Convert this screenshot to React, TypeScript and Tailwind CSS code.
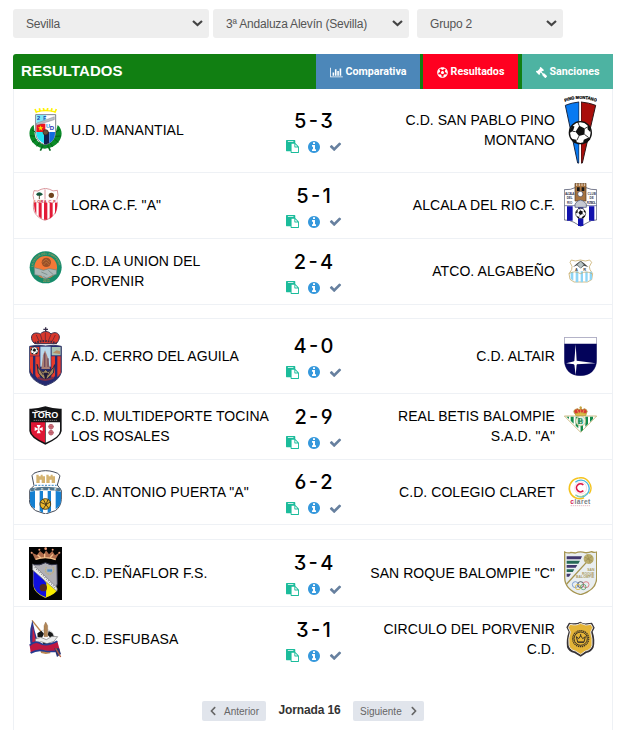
import type * as React from 'react';
import { FaChevronLeft, FaChevronRight, FaFutbol, FaGavel } from 'react-icons/fa';

interface CrestProps {
  height: number;
  children: React.ReactNode;
}

// Crests are drawn on a 99 unit wide canvas, three units per pixel.
const Crest: React.FC<CrestProps> = ({ height, children }) => (
  <svg className="w-[33px] shrink-0" viewBox={`0 0 99 ${height}`} aria-hidden="true">
    {children}
  </svg>
);

const Ball: React.FC<{ cx: number; cy: number; r: number }> = ({ cx, cy, r }) => (
  <g transform={`translate(${cx} ${cy}) scale(${r / 34})`}>
    <circle r="32" fill="#fff" stroke="#111" strokeWidth="4" />
    <path d="M-3-20 13-12 12 5-4 10-14-3zM-32-6l9-14 6 2-4 12-8 6zM-26 18l14 3 2 8-7 2zM22-23l8 11-1 10-8-8zM10 21l16-8 3 6-12 12-9-2z" fill="#111" />
    <path d="M-3-20-8-32M13-12l9-5M12 5l12 9M-4 10l-6 12M-14-3l-9-1" stroke="#111" strokeWidth="2.5" fill="none" />
  </g>
);

const Manantial = () => (
  <Crest height={129}>
    <path d="M14 50C-4 62-1 91 12 104c8 9 22 17 36 18 16-1 31-8 40-19 13-15 14-39-2-52l-6 24c-2 21-15 32-31 35-19-4-31-14-32-34z" fill="#0a8a28" />
    <path d="M8 65l12 8M3 83l15 2M9 102l14-8M23 115l9-12M92 64l-12 9M96 84l-16 1M88 103l-11-9M71 116l-8-12" stroke="#056018" strokeWidth="3" />
    <path d="M42 112l-8 16M56 112l8 16" stroke="#086c20" strokeWidth="5" />
    <path d="M20 12q30-9 60 0M18 3l5 12M31 1l3 10M43 0l2 9M56 0l-1 9M69 1l-3 10M82 3l-5 12" fill="none" stroke="#fff200" strokeWidth="5" />
    <path d="M20 20h60v50c0 20-12 34-31 41-18-6-29-19-29-40z" fill="#fff" stroke="#394351" strokeWidth="2" />
    <path d="M22 21h29v20l-29 8z" fill="#7ce9f5" />
    <path d="M22 47h27v25H22z" fill="#ed1520" />
    <path d="M22 72h27v36C32 101 22 91 22 72z" fill="#24e3f4" />
    <path d="M45 72h16v33l-12 5-4-2z" fill="#13204e" />
    <path d="M61 72h17c0 19-6 27-17 33z" fill="#126ce0" />
    <path d="M22 46l54-20v9L22 52z" fill="#b8bec4" stroke="#667" strokeWidth="1" />
    <path d="M35 52l2 6h6l-5 4 2 6-5-4-5 4 2-6-5-4h6z" fill="#ffe400" />
    <circle cx="50" cy="73" r="8" fill="#69503b" stroke="#302018" strokeWidth="2" />
    <text x="24" y="37" fontSize="17" fontWeight="700" fill="#2434af" fontFamily="Liberation Sans, sans-serif">2</text>
    <text x="43" y="35" fontSize="15" fontWeight="700" fill="#2434af" fontFamily="Liberation Sans, sans-serif">F</text>
    <text x="51" y="59" fontSize="17" fontWeight="700" fill="#128bdd" fontFamily="Liberation Sans, sans-serif">U</text>
    <text x="62" y="67" fontSize="18" fontWeight="700" fill="#2031b2" fontFamily="Liberation Sans, sans-serif">D</text>
  </Crest>
);

const PinoMontano = () => (
  <Crest height={204}>
    <defs>
      <path id="pino-arc" d="M3 18Q50-2 97 18" />
    </defs>
    <text fontSize="13" fontWeight="700" fill="#111" stroke="#111" strokeWidth="0.8" fontFamily="Liberation Sans, sans-serif">
      <textPath href="#pino-arc" textLength="96" lengthAdjust="spacingAndGlyphs">PINO MONTANO</textPath>
    </text>
    <path d="M4 28q20-8 41-10v183h-4z" fill="#087af2" stroke="#182744" strokeWidth="3" />
    <path d="M51 18q23 2 44 10L55 201h-4z" fill="#a90e0b" stroke="#2b1719" strokeWidth="3" />
    <path d="M46 18h5v185h-5z" fill="#fff" />
    <Ball cx={49} cy={110} r={35} />
  </Crest>
);

const Lora = () => (
  <Crest height={99}>
    <path d="M15 8q12 4 21-4 13-6 26 0 9 8 23 3l2 15-4 14c4 25 0 49-35 61C13 86 10 61 15 37l-3-15z" fill="#fff" stroke="#c96670" strokeWidth="2" />
    <path d="M15 43h7v36q-7-11-7-36zM29 43h9v49l-9-7zM45 43h10v52h-10zM62 43h9v42l-9 8zM78 43h7q0 23-7 36z" fill="#e31b37" />
    <path d="M48 4v32" stroke="#c76570" strokeWidth="2" />
    <path d="M31 20v14" stroke="#5c5131" strokeWidth="3" />
    <path d="M21 19q9-12 21 0l-6 4H25z" fill="#17563c" />
    <circle cx="67" cy="22" r="8" fill="#70431e" />
    <path d="M14 34h70v10H14z" fill="#fff3f2" />
    <text x="16" y="44" fontSize="12" fontWeight="700" fill="#c92338" textLength="67" fontFamily="Liberation Sans, sans-serif">LORA C.F.</text>
  </Crest>
);

const Alcala = () => (
  <Crest height={132}>
    <path d="M1 20q20 1 32-6h33q15 7 32 6v91q-16-1-26 7l-22 12-20-12q-14-8-29-7z" fill="#fff" stroke="#333a55" strokeWidth="2" />
    <path d="M33 1h33v53H33z" fill="#a77440" stroke="#52371d" strokeWidth="2" />
    <path d="M38 1v8m8-8v8m8-8v8m8-8v8" stroke="#fff" strokeWidth="2" />
    <path d="M39 13h8v11h-8zM53 13h8v11h-8z" fill="#171719" />
    <circle cx="49" cy="33" r="8" fill="#fff" stroke="#3b3c50" strokeWidth="2" />
    <path d="M2 68h96" stroke="#414982" strokeWidth="2" />
    <path d="M9 70h17v43H9zM75 70h16v43H75zM42 61h16v18H42zM42 106h16v23H42z" fill="#1212ad" />
    <path d="M33 63q16-24 34 0v10H33z" fill="#c6c9d2" stroke="#46506b" strokeWidth="2" />
    <Ball cx={50} cy={91} r={16} />
    <g fontSize="9" fontWeight="700" fill="#3b4054" textAnchor="middle" fontFamily="Liberation Sans, sans-serif">
      <text x="17" y="35" textLength="28">ALCALA</text>
      <text x="17" y="48">DEL</text>
      <text x="17" y="62">RIO</text>
      <text x="83" y="35">CLUB</text>
      <text x="83" y="48">DE</text>
      <text x="82" y="62" textLength="27">FUTBOL</text>
    </g>
  </Crest>
);

const Union = () => (
  <Crest height={120}>
    <defs>
      <path id="union-arc" d="M12 49a38 38 0 0 1 76 0" />
    </defs>
    <circle cx="50" cy="49" r="48" fill="#178c6b" />
    <circle cx="50" cy="49" r="34" fill="#f47837" />
    <circle cx="52" cy="34" r="14" fill="#995029" />
    <path d="M40 34l11-9 12 10M44 42l8-9 9 9" stroke="#c77b3c" fill="none" strokeWidth="2" />
    <path d="M16 50q18 4 27 8l17-5 23 4-1 13-13 4-18 9q-8 1-14-8l-20-4z" fill="#acb9b8" stroke="#65837e" strokeWidth="2" />
    <path d="M37 63l18 8M43 76l12 7M58 58l15 13" stroke="#667b78" strokeWidth="2" />
    <text fontSize="9" fontWeight="700" fill="#a09a5c" fontFamily="Liberation Sans, sans-serif">
      <textPath href="#union-arc" textLength="114">LA UNION DEL PORVENIR</textPath>
    </text>
    <text x="41" y="94" fontSize="9" fontWeight="700" fill="#a09a5c" fontFamily="Liberation Sans, sans-serif">2015</text>
  </Crest>
);

const Algabeno = () => (
  <Crest height={72}>
    <path d="M22 3l12 3 15-3 15 3 13-3 6 7-7 13 2 9 8 12-3 18-13 7H30l-12-8-3-17 8-12 1-10-6-12z" fill="#fff" stroke="#bd9d4e" strokeWidth="2" />
    <path d="M20 39h8v26l-8-6zM35 37h8v33h-8zM50 37h7v33h-7zM64 38h7v30h-7zM77 38h7v22l-7 5z" fill="#8ed5f5" />
    <path d="M27 24l11-10 12-9 12 9 11 10-13-4-10 8-11-9z" fill="#414544" />
    <path d="M50 7l10 10-10 11-11-11z" fill="#b8c4c5" stroke="#4f5755" />
    <text x="33" y="35" fontSize="12" fontWeight="700" fill="#42474b" fontFamily="Liberation Sans, sans-serif">A</text>
    <text x="58" y="35" fontSize="12" fontWeight="700" fill="#42474b" fontFamily="Liberation Sans, sans-serif">R</text>
    <path d="M15 44q17-11 34 0 19-10 35 0" stroke="#c2a45c" strokeWidth="2" fill="none" />
  </Crest>
);

const Cerro = () => (
  <Crest height={177}>
    <path d="M50 1v15M43 7h14" stroke="#39304b" strokeWidth="4" />
    <path d="M17 50C2 37 6 19 20 18c7 0 11 1 14 3 9-10 24-10 32 0 10-8 25-4 25 9 0 8-4 14-9 20z" fill="#d8372c" stroke="#372e4b" strokeWidth="3" />
    <path d="M17 48q33-12 66 1" stroke="#382a43" strokeWidth="6" fill="none" strokeDasharray="5 3" />
    <path d="M22 24l8 18M34 22l6 20M49 17v25M66 22l-8 20M79 24l-9 18" stroke="#7c2932" strokeWidth="3" />
    <path d="M2 58q25-6 48-1 24-5 47 1v78q-7 27-48 40Q7 162 2 136z" fill="#252a71" stroke="#383f69" strokeWidth="3" />
    <path d="M3 60h28v26H3zM3 88h9v55q-9-8-9-20zM19 88h13v69q-13-6-13-15zM67 88h11v57q0 5-11 12zM85 88h10v50l-10 13z" fill="#e93a2b" />
    <path d="M34 59h31v60H34z" fill="#b9d8eb" />
    <path d="M68 60h27v25H68z" fill="#a9c4b5" />
    <path d="M71 78l12-8 10 3v8z" fill="#b58e65" />
    <Ball cx={16} cy={71} r={12} />
    <path d="M42 85l6-15 8 20 7 36H37z" fill="#a97e74" />
    <path d="M47 79v41M57 94v26" stroke="#71495b" strokeWidth="4" />
    <path d="M24 112q6 20 20 22l6-7 6 7q15-3 21-21l-4 25-19 18H44L28 138z" fill="#a38b62" stroke="#292741" strokeWidth="3" />
    <path d="M34 130l9 14M66 130l-9 14" stroke="#3a3046" strokeWidth="3" />
    <path d="M43 137h15l-8 25z" fill="#201b39" />
    <path d="M26 152q24 14 48-1" stroke="#7b3048" strokeWidth="6" fill="none" />
  </Crest>
);

const Altair = () => (
  <Crest height={117}>
    <path d="M1 1h97v66c0 32-20 49-49 49C20 116 1 99 1 67z" fill="#fff" stroke="#77759b" strokeWidth="2" />
    <path d="M1 20h97v48c0 31-20 48-49 48S1 99 1 68z" fill="#03035a" />
    <path d="M35 22l3 49 57 8-57 3-3 33-4-33-25-3 25-6z" fill="#fff" />
    <circle cx="34" cy="78" r="6" fill="#fff" />
  </Crest>
);

const Tocina = () => (
  <Crest height={117}>
    <path d="M1 8Q25 9 49 1q25 8 49 7v67q-2 20-49 41Q2 95 1 75z" fill="#121315" />
    <path d="M6 49h42v61Q6 91 6 74z" fill="#df1735" />
    <path d="M50 49h43v25q0 18-43 36z" fill="#fff" />
    <text x="10" y="36" fontSize="25" fontWeight="700" textLength="78" lengthAdjust="spacingAndGlyphs" fill="#fff" fontFamily="Liberation Sans, sans-serif">TORO</text>
    <path d="M17 14q16 7 37 1M12 17v5" stroke="#fff" strokeWidth="3" fill="none" />
    <path d="M14 43h71" stroke="#aaa" strokeWidth="2" strokeDasharray="4 2" />
    <path d="M28 68l-5-11h12l-5 11 11-5v12l-11-5 5 12H23l5-12-11 5V63z" fill="#fff" />
    <g fill="#db7983" stroke="#ac5360" strokeWidth="2">
      <circle cx="66" cy="62" r="7" />
      <circle cx="66" cy="80" r="7" />
      <path d="M58 62h17M58 80h17M66 54v34" />
    </g>
  </Crest>
);

const Betis = () => (
  <Crest height={117}>
    <path d="M1 30h97L50 79z" fill="#fff" stroke="#b69b4b" strokeWidth="2" />
    <path d="M7 32h8v7zM20 32h9v21l-9-9zM35 32h8v35l-8-8zM49 32h8v40l-7 6zM64 32h8v22l-8 8zM78 32h9v7l-9 9z" fill="#138b4d" />
    <circle cx="50" cy="45" r="15" fill="#e8f2e5" stroke="#b69b4b" strokeWidth="1.5" />
    <text x="42" y="53" fontSize="22" fontWeight="700" fill="#158953" fontFamily="Liberation Serif, serif">B</text>
    <path d="M43 35v20M42 45h16" stroke="#158953" strokeWidth="2.5" />
    <path d="M34 25q-9-11 1-15 7-4 10 1 5-7 11 0 5-5 11 0 6 5-2 14z" fill="#d83737" stroke="#b8973c" strokeWidth="3" />
    <path d="M50 1v9M46 4h8M35 23q15-5 31 0v5H35z" stroke="#c2a33b" strokeWidth="3" fill="#e4c34d" />
    <path d="M40 12l4 10M50 10v12M60 12l-4 10" stroke="#e7c355" strokeWidth="2" />
  </Crest>
);

const Puerta = () => (
  <Crest height={132}>
    <path d="M9 17Q13 8 25 6q12-4 25-4 13 0 25 4 12 2 18 11l-8 28 12 16v28q-2 22-18 33l-29 10-30-10Q1 109 1 89V61l14-14z" fill="#fff" stroke="#454c5a" strokeWidth="3" />
    <path d="M22 39V14h7v5h6v-5h6v5h7v20zM52 39V14h7v5h6v-5h6v5h7v20z" fill="#d4b371" />
    <path d="M32 39V29h6v10M62 39V29h6v10" fill="#fff" />
    <path d="M18 46h65" stroke="#599bd0" strokeWidth="4" strokeDasharray="6 4" />
    <path d="M4 55q46-9 91 0v9q-46-7-91 0z" fill="#52758b" />
    <path d="M3 65q10-2 15-2v53Q1 108 3 91zM32 63h10v65l-10-5zM56 63h10v61l-10 5zM80 63q9 1 16 2v25q0 18-16 28z" fill="#1580d1" />
    <circle cx="49" cy="102" r="16" fill="#eab72d" stroke="#50401a" strokeWidth="3" />
    <path d="M35 97l16 7 14-9M43 88l8 16-9 14M57 88l-6 16 8 11" stroke="#50401a" strokeWidth="3" fill="none" />
    <text x="16" y="62" fontSize="9" fontWeight="700" textLength="66" fill="#fff" fontFamily="Liberation Sans, sans-serif">C D A P</text>
  </Crest>
);

const Claret = () => (
  <Crest height={92}>
    <g fill="none">
      <path d="M44 3a31 31 0 1 0 16 59" stroke="#f4c31d" strokeWidth="5" />
      <path d="M44 3a31 31 0 0 1 32 47" stroke="#f4c31d" strokeWidth="4" />
      <path d="M34 16a25 25 0 1 1 1 38" stroke="#48b9de" strokeWidth="4" />
      <path d="M68 48a24 24 0 0 1-34 6" stroke="#a8d38f" strokeWidth="3" />
      <circle cx="50" cy="33" r="18" stroke="#f5c9d4" strokeWidth="2" />
      <path d="M58 24a12 12 0 1 0 0 17" stroke="#db1647" strokeWidth="5" />
    </g>
    <text x="19" y="80" fontSize="20" fontWeight="700" fill="#777c82" fontFamily="Liberation Sans, sans-serif" textLength="60">
      <tspan fill="#d32351">c</tspan>laret
    </text>
    <path d="M20 86h60" stroke="#d69ba6" strokeWidth="2" strokeDasharray="4 2" />
  </Crest>
);

const Penaflor = () => (
  <Crest height={159}>
    <path d="M0 0h99v159H0z" fill="#030303" />
    <path d="M19 38L9 17l15 7 9-12 12 10 6-12 9 12 10-10 8 13 13-8-12 21q-30-10-60 0z" fill="#af6c4c" />
    <path d="M20 37q30-11 60 1M26 24l9 8M47 20v11M72 22l-8 9" stroke="#f5c28e" strokeWidth="4" fill="none" />
    <circle cx="8" cy="17" r="3" fill="#f1a27b" />
    <circle cx="31" cy="8" r="3" fill="#f1a27b" />
    <circle cx="50" cy="5" r="4" fill="#f1a27b" />
    <circle cx="71" cy="8" r="3" fill="#f1a27b" />
    <circle cx="91" cy="17" r="3" fill="#f1a27b" />
    <path d="M13 53q20 4 36-6 17 10 35 5l1 58q-2 28-36 42-33-14-36-40z" fill="#b1b0b5" stroke="#34364b" strokeWidth="3" />
    <path d="M13 61l73 65q-8 18-37 26-36-15-36-39z" fill="#f8ed00" />
    <path d="M13 61l39 47-1 43q-37-14-38-40z" fill="#1010df" />
    <path d="M11 51l73 71v11L11 69z" fill="#eee" stroke="#74767d" strokeWidth="2" />
    <path d="M17 61l61 61" stroke="#7f8084" strokeWidth="4" strokeDasharray="3 4" />
    <circle cx="43" cy="122" r="11" fill="#552c1c" />
    <path d="M52 60q-8 20 10 22 17-4 10-22" stroke="#c9b460" strokeWidth="3" strokeDasharray="4 2" fill="none" />
    <path d="M55 67h14v7H55z" fill="#4c92c9" />
  </Crest>
);

const SanRoque = () => (
  <Crest height={132}>
    <path d="M2 3q11 5 19 1l13 2Q48 0 63 5q10 1 20-3 7 4 15 1v78q-1 36-48 50Q3 117 2 80z" fill="#e9eef0" stroke="#a69551" strokeWidth="4" />
    <path d="M8 16h46l-4 9H8zM8 42h32l-5 8H8zM8 68h13l-6 9H8z" fill="#41386e" />
    <path d="M8 29h40l-5 9H8zM8 55h23l-5 8H8z" fill="#266856" />
    <path d="M8 99L70 31" stroke="#a69551" strokeWidth="4" />
    <circle cx="74" cy="24" r="15" fill="#b9ac6c" />
    <path d="M62 18l24 13M64 30l20-14M70 11l9 27" stroke="#988b51" strokeWidth="2" />
    <g fontSize="10" fontWeight="700" textAnchor="end" fill="#aa9b5f" fontFamily="Liberation Sans, sans-serif">
      <text x="91" y="60">SAN</text>
      <text x="91" y="71">ROQUE</text>
      <text x="91" y="82" textLength="55">BALOMPIE</text>
    </g>
    <g fill="none" strokeWidth="2.5">
      <circle cx="34" cy="101" r="9" stroke="#6d93d0" />
      <circle cx="50" cy="101" r="9" stroke="#44494f" />
      <circle cx="66" cy="101" r="9" stroke="#d87178" />
      <circle cx="42" cy="108" r="8" stroke="#d9b94a" />
      <circle cx="58" cy="108" r="8" stroke="#57a46d" />
    </g>
  </Crest>
);

const Esfubasa = () => (
  <Crest height={118}>
    <path d="M9 4l28 35" stroke="#bb8248" strokeWidth="4" />
    <path d="M10 4q-8 26-7 49 0 18 3 26l17-4 3-10Q16 36 10 4z" fill="#283991" />
    <path d="M11 20L10 70l11-3z" fill="#c51f43" />
    <circle cx="51" cy="57" r="25" fill="#fff" stroke="#b9bbbd" strokeWidth="2" />
    <path d="M25 43l12-8 8 9-6 12-13-2zM59 36l11 6 5 11-10 4-9-9zM41 68l14-5 9 9-8 11H44z" fill="#171818" />
    <path d="M45 53V20l5-11 6 11v33z" fill="#b18657" stroke="#7e5c3b" />
    <path d="M19 60l16-5 17 7 17-10 17 1-11 14-21 7-17-6-17 4z" fill="#eceded" stroke="#777" strokeWidth="2" />
    <path d="M34 92h30v11l-14 2-14-3z" fill="#bb8852" />
    <path d="M2 79q15-15 30-7 18 12 53-5l8 28q-20 2-40 0-25-4-48 6z" fill="#be1741" />
    <path d="M2 79q15-15 30-7 18 12 53-5M5 102q20-12 42-6 20 4 44-2" stroke="#253b91" strokeWidth="5" fill="none" />
    <path d="M76 88l8 26 12-9-6-17z" fill="#29336f" />
    <path d="M80 88l15 26" stroke="#b35c41" strokeWidth="4" />
  </Crest>
);

const Circulo = () => (
  <Crest height={108}>
    <path d="M49 2q8 7 20 5l15-2 8 15-6 12q8 24 3 47-5 14-22 17l-17 11-19-11q-17-3-22-17-3-24 5-47L7 19 15 5q21 5 34-3z" fill="#373337" />
    <path d="M49 7q17 9 32 3l5 10-6 13q6 20 4 40-4 15-20 17L50 100 34 90Q18 87 15 73q-3-20 4-40l-6-13 5-10q20 5 31-3z" fill="#e4b437" stroke="#eee8df" strokeWidth="3" />
    <circle cx="50" cy="53" r="24" fill="none" stroke="#3c3326" strokeWidth="4" strokeDasharray="4 2" />
    <circle cx="50" cy="53" r="20" fill="none" stroke="#3c3326" strokeWidth="3" />
    <path d="M37 47l7 6 6-9 6 9 8-6-4 16H41z" fill="#e4b437" stroke="#3c3326" strokeWidth="3" />
    <path d="M50 39v7M41 64h19" stroke="#3c3326" strokeWidth="3" />
  </Crest>
);

const PasteIcon = () => (
  <svg className="w-[13px] h-[13px] fill-[#1bbc9b]" viewBox="0 0 1792 1792">
    <path d="M768 1664h896v-640h-416q-40 0-68-28t-28-68v-416h-384v1152zm256-1440v-64q0-13-9.5-22.5t-22.5-9.5h-704q-13 0-22.5 9.5t-9.5 22.5v64q0 13 9.5 22.5t22.5 9.5h704q13 0 22.5-9.5t9.5-22.5zm256 672h299l-299-299v299zm512 128v672q0 40-28 68t-68 28h-960q-40 0-68-28t-28-68v-160h-544q-40 0-68-28t-28-68v-1344q0-40 28-68t68-28h1088q40 0 68 28t28 68v328q21 13 36 28l408 408q28 28 48 76t20 88z" />
  </svg>
);

const InfoIcon = () => (
  <svg className="w-[14px] h-[14px] fill-[#3598dc]" viewBox="0 0 1792 1792">
    <path d="M1152 1376v-160q0-14-9-23t-23-9h-96v-512q0-14-9-23t-23-9h-320q-14 0-23 9t-9 23v160q0 14 9 23t23 9h96v320h-96q-14 0-23 9t-9 23v160q0 14 9 23t23 9h448q14 0 23-9t9-23zm-128-896v-160q0-14-9-23t-23-9h-192q-14 0-23 9t-9 23v160q0 14 9 23t23 9h192q14 0 23-9t9-23zm640 416q0 209-103 385.5t-279.5 279.5-385.5 103-385.5-103-279.5-279.5-103-385.5 103-385.5 279.5-279.5 385.5-103 385.5 103 279.5 279.5 103 385.5z" />
  </svg>
);

const CheckIcon = () => (
  <svg className="w-[13px] h-[13px] fill-[#67809f]" viewBox="0 0 1792 1792">
    <path d="M1671 566q0 40-28 68l-724 724-136 136q-28 28-68 28t-68-28l-136-136-362-362q-28-28-28-68t28-68l136-136q28-28 68-28t68 28l294 295 656-657q28-28 68-28t68 28l136 136q28 28 28 68z" />
  </svg>
);

const BarChartIcon = () => (
  <svg className="w-[13px] h-[11px] fill-white" viewBox="0 0 2048 1792">
    <path d="M640 896v512h-256v-512h256zm384-512v1024h-256v-1024h256zm1024 1152v128h-2048v-1536h128v1408h1920zm-640-896v768h-256v-768h256zm384-384v1152h-256v-1152h256z" />
  </svg>
);

interface Match {
  home: string;
  away: string;
  score: string;
  homeCrest: React.ReactNode;
  awayCrest: React.ReactNode;
  className: string;
}

const matches: Match[] = [
  { home: 'U.D. MANANTIAL', away: 'C.D. SAN PABLO PINO MONTANO', score: '5 - 3', homeCrest: <Manantial />, awayCrest: <PinoMontano />, className: 'h-[84px] border-b pb-0.5 [&>.score]:mt-0.5' },
  { home: 'LORA C.F. "A"', away: 'ALCALA DEL RIO C.F.', score: '5 - 1', homeCrest: <Lora />, awayCrest: <Alcala />, className: 'h-[66px] border-b pb-0.5 [&>.score]:mt-0.5' },
  { home: 'C.D. LA UNION DEL PORVENIR', away: 'ATCO. ALGABEÑO', score: '2 - 4', homeCrest: <Union />, awayCrest: <Algabeno />, className: 'h-[66px] border-b pb-0.5 [&>.score]:mt-0.5' },
  { home: 'A.D. CERRO DEL AGUILA', away: 'C.D. ALTAIR', score: '4 - 0', homeCrest: <Cerro />, awayCrest: <Altair />, className: 'mt-[13px] h-[76px] border-y' },
  { home: 'C.D. MULTIDEPORTE TOCINA LOS ROSALES', away: 'REAL BETIS BALOMPIE S.A.D. "A"', score: '2 - 9', homeCrest: <Tocina />, awayCrest: <Betis />, className: 'h-[66px] border-b pb-0.5 [&>.score]:mt-0.5' },
  { home: 'C.D. ANTONIO PUERTA "A"', away: 'C.D. COLEGIO CLARET', score: '6 - 2', homeCrest: <Puerta />, awayCrest: <Claret />, className: 'h-[65px] border-b' },
  { home: 'C.D. PEÑAFLOR F.S.', away: 'SAN ROQUE BALOMPIE "C"', score: '3 - 4', homeCrest: <Penaflor />, awayCrest: <SanRoque />, className: 'mt-[14px] h-[68px] border-y' },
  { home: 'C.D. ESFUBASA', away: 'CIRCULO DEL PORVENIR C.D.', score: '3 - 1', homeCrest: <Esfubasa />, awayCrest: <Circulo />, className: 'h-[65px] pb-0.5 [&>.score]:mt-0.5' },
];

const MatchRow: React.FC<Match> = ({ home, away, score, homeCrest, awayCrest, className }) => (
  <div className={`flex items-center border-[#eef1f5] px-[15px] text-sm leading-5 tracking-[0.06px] text-black ${className}`}>
    {homeCrest}
    <div className="ml-[9px] w-[201px]">{home}</div>
    <div className="score flex h-12 w-[83px] flex-col items-center">
      <div className="font-['Inter'] text-[20px] leading-7 font-medium tracking-normal whitespace-pre [word-spacing:-3px] [font-feature-settings:'cv09','cv03','cv04']">{score}</div>
      <div className="mt-[2px] flex h-5 shrink-0 items-center gap-[8px]">
        <PasteIcon />
        <InfoIcon />
        <CheckIcon />
      </div>
    </div>
    <div className="mr-[9px] w-[200px] text-right">{away}</div>
    {awayCrest}
  </div>
);

const Select: React.FC<{ label: string; className: string }> = ({ label, className }) => (
  <button className={`flex h-[29px] items-center justify-between rounded-[3px] bg-[#eee] pr-[6px] pl-[13px] text-xs tracking-[-0.2px] text-[#555] ${className}`}>
    {label}
    <svg className="h-[7px] w-[11px]" viewBox="0 0 11 7" fill="none" stroke="#444" strokeWidth="2.2">
      <path d="M1 1l4.5 4L10 1" />
    </svg>
  </button>
);

export default function App() {
  return (
    <div className="h-[730px] w-[618px] overflow-hidden bg-white pt-[9px] pl-[13px] font-['Liberation_Sans',Arial,sans-serif]">
      <div className="flex">
        <Select label="Sevilla" className="w-[196px]" />
        <Select label="3ª Andaluza Alevín (Sevilla)" className="ml-1 w-[196px]" />
        <Select label="Grupo 2" className="ml-2 w-[146px]" />
      </div>

      <div className="mt-4 w-[600px]">
        <div className="flex h-[35px] items-stretch rounded-tl-[3px] bg-[#117f12] text-white">
          <h1 className="flex flex-1 items-center pl-2 text-[15px] font-bold tracking-[0.05px]">RESULTADOS</h1>
          <div className="flex font-['Roboto'] text-[10.7px] font-bold">
            <button className="mr-[3px] flex w-[104px] items-center justify-center gap-[3px] bg-[#4c87b9] pt-[2px]">
              <BarChartIcon />
              Comparativa
            </button>
            <button className="mr-1 flex w-[95px] items-center justify-center gap-[3px] bg-[#ff0020] pt-[2px]">
              <FaFutbol size={11} />
              Resultados
            </button>
            <button className="flex w-[91px] items-center justify-center gap-[3px] bg-[#4db3a2] pt-[2px]">
              <FaGavel size={11} className="-scale-x-100" />
              Sanciones
            </button>
          </div>
        </div>

        <div className="h-[641px] border-x border-[#eef1f5]">
          {matches.map((match) => (
            <MatchRow key={match.home} {...match} />
          ))}
          <div className="mt-[29px] flex h-5 items-center pl-[188px] text-[10px] text-[#666]">
            <button className="flex h-5 w-16 items-center rounded-[2px] bg-[#e1e5ec] pl-[6px]">
              <FaChevronLeft size={10} />
              <span className="ml-[6px]">Anterior</span>
            </button>
            <span className="w-[87px] pb-[3px] text-center text-xs font-bold tracking-[-0.15px] text-[#333]">Jornada 16</span>
            <button className="flex h-5 w-[71px] items-center rounded-[2px] bg-[#e1e5ec] pl-[7px]">
              Siguiente
              <FaChevronRight size={10} className="ml-[7px]" />
            </button>
          </div>
        </div>
      </div>
    </div>
  );
}
